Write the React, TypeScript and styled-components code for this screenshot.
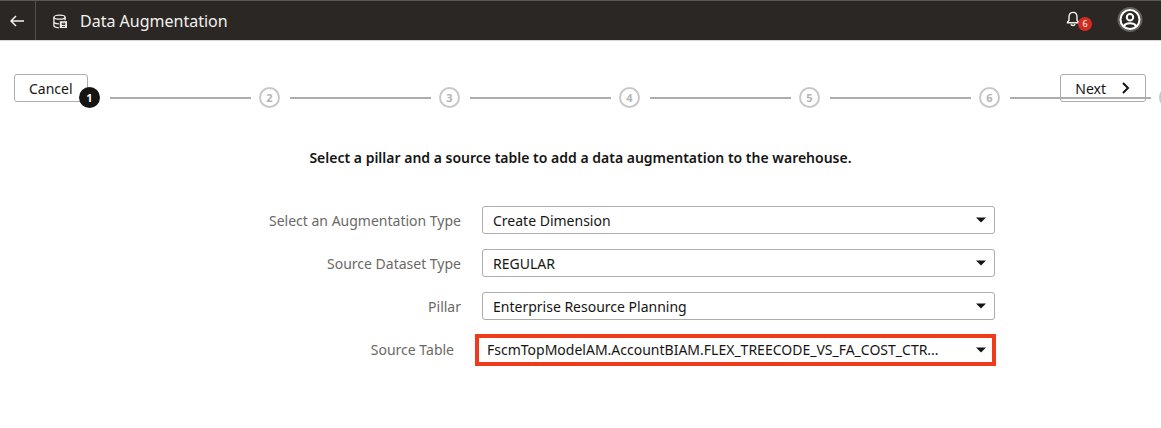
import React from "react";
import styled, { createGlobalStyle, css } from "styled-components";

const GlobalStyle = createGlobalStyle`
  *, *::before, *::after { box-sizing: border-box; }
  body {
    margin: 0;
    background: #fff;
    color: #161513;
    font: 14px/20px "Noto Sans", "Open Sans", sans-serif;
    overflow-x: hidden;
  }
  button, select { font: inherit; color: inherit; }
`;

const Header = styled.header`
  display: flex;
  align-items: stretch;
  height: 41px;
  border-top: 1px solid #5a5856;
  border-bottom: 1px solid #d9d7d5;
  background: #2b2724;
  color: #f3f1ee;
`;

const BackButton = styled.button`
  display: flex;
  align-items: center;
  justify-content: center;
  width: 36px;
  padding: 0 2px 0 0;
  border: 0;
  border-right: 1px solid #514e4b;
  background: none;
`;

const Brand = styled.div`
  display: flex;
  flex: 1;
  align-items: center;
  gap: 12px;
  padding-left: 17px;
`;

const Title = styled.h1`
  margin: 0;
  font-size: 16px;
  font-weight: 400;
  line-height: 20px;
`;

const HeaderActions = styled.div`
  display: flex;
  align-items: center;
  gap: 31px;
  padding-right: 18px;
`;

const IconButton = styled.button`
  position: relative;
  display: flex;
  padding: 0;
  border: 0;
  background: none;
`;

const Badge = styled.span`
  position: absolute;
  top: 6px;
  left: 12px;
  width: 14px;
  height: 14px;
  border-radius: 50%;
  background: #d42b1f;
  color: #fff;
  font-size: 9px;
  line-height: 14px;
  text-align: center;
`;

const Wizard = styled.section`
  display: grid;
  padding-top: 33px;
  overflow: hidden;
`;

const Toolbar = styled.div`
  grid-area: 1 / 1;
  display: flex;
  align-items: flex-start;
  justify-content: space-between;
  padding: 0 15px 0 14px;
`;

const Button = styled.button`
  display: flex;
  align-items: center;
  gap: 16px;
  height: 28px;
  padding: 2px 14px 0;
  border: 1px solid #aeacaa;
  border-radius: 3px;
  background: #fff;

  svg { margin-bottom: 2px; }
`;

const Steps = styled.ol`
  grid-area: 1 / 1;
  display: flex;
  min-width: 0;
  margin: 13px 0 0;
  padding: 0 0 0 79px;
  list-style: none;
  pointer-events: none;
`;

const Step = styled.li`
  display: flex;
  flex: 0 0 180px;
  align-items: center;
  gap: 10px;
  padding-right: 8px;

  &:not(:last-child)::after {
    content: "";
    flex: 1;
    height: 2px;
    background: #adadad;
  }
`;

const StepNumber = styled.span<{ $current: boolean }>`
  width: 21px;
  height: 21px;
  border: 2px solid ${(p) => (p.$current ? "#161513" : "#c8c8c8")};
  border-radius: 50%;
  background: ${(p) => (p.$current ? "#161513" : "#fff")};
  color: ${(p) => (p.$current ? "#fff" : "#b4b4b4")};
  font-size: 11px;
  font-weight: 700;
  line-height: 17px;
  text-align: center;
`;

const Intro = styled.h2`
  margin: 40px 16px 38px;
  font-size: 14px;
  font-weight: 600;
  line-height: 20px;
  text-align: center;
`;

const Form = styled.form`
  display: flex;
  flex-direction: column;
  gap: 15px;
  width: 100%;
  max-width: 829px;
  margin: 0 auto;
`;

const Row = styled.div<{ $highlighted: boolean }>`
  display: flex;
  align-items: center;
  gap: 21px;
  ${(p) => p.$highlighted && css`margin: -1px -1px 0 0;`}
`;

const Label = styled.label<{ $highlighted: boolean }>`
  flex: 1;
  padding-top: ${(p) => (p.$highlighted ? 0 : 2)}px;
  color: #6b6966;
  text-align: right;
`;

const Field = styled.div<{ $highlighted: boolean }>`
  display: grid;
  flex: 0 1 ${(p) => (p.$highlighted ? 521 : 513)}px;
  align-items: center;
`;

const Select = styled.select<{ $highlighted: boolean }>`
  grid-area: 1 / 1;
  width: 100%;
  min-width: 0;
  appearance: none;
  border: 1px solid #aeacaa;
  border-radius: 3px;
  height: 28px;
  padding: 2px 36px 0 10px;
  background: #fff;
  ${(p) =>
    p.$highlighted &&
    css`
      height: 32px;
      padding: 0 32px 0 8px;
      border: 4px solid #f03a1c;
      border-radius: 0;
    `}
`;

const Arrow = styled.svg<{ $highlighted: boolean }>`
  grid-area: 1 / 1;
  justify-self: end;
  margin-right: ${(p) => (p.$highlighted ? 10 : 9)}px;
  pointer-events: none;
`;

const FIELDS = [
  { id: "type", label: "Select an Augmentation Type", value: "Create Dimension" },
  { id: "dataset", label: "Source Dataset Type", value: "REGULAR" },
  { id: "pillar", label: "Pillar", value: "Enterprise Resource Planning" },
  {
    id: "table",
    label: "Source Table",
    value: "FscmTopModelAM.AccountBIAM.FLEX_TREECODE_VS_FA_COST_CTR...",
    highlighted: true,
  },
];

export default function App() {
  return (
    <>
      <GlobalStyle />
      <Header>
        <BackButton aria-label="Back">
          <svg width="14" height="12" viewBox="0 0 14 12" fill="none" stroke="currentColor" strokeWidth="1.5">
            <path d="M14 6H1.2M6 1L1 6l5 5" />
          </svg>
        </BackButton>
        <Brand>
          <svg width="15" height="17" viewBox="0 -2 15 17" fill="none" stroke="currentColor" strokeWidth="1.3">
            <ellipse cx="6.5" cy="3.2" rx="5.6" ry="2" />
            <path d="M.9 3.2v8.4c0 1.2 2 2.1 5 2.2M12.1 3.2v3M.9 7.8c0 1.2 2 2 5 2" />
            <path d="M6.800 7.200H14V14H6.800z" fill="currentColor" stroke="none" />
            <path d="M9 9.200h3v1.300H9zM9 12.500h3" stroke="#2b2724" strokeWidth="0.9" />
          </svg>
          <Title>Data Augmentation</Title>
        </Brand>
        <HeaderActions>
          <IconButton aria-label="Notifications, 6 unread">
            <svg width="20" height="19" viewBox="0 0 20 19" fill="none" stroke="currentColor" strokeWidth="1.4">
              <path d="M.8 11.8h12.4M1.3 11.5l1.7-2.300V6C3 3 4.600 1.400 7 1.400S11 3 11 6v3.200l1.700 2.300" />
              <path d="M4.800 13.300c.4.800 1.200 1.200 2.200 1.200s1.800-.4 2.200-1.200" />
            </svg>
            <Badge>6</Badge>
          </IconButton>
          <IconButton aria-label="Account">
            <svg width="26" height="28" viewBox="0 0 26 28" fill="none">
              <circle cx="13" cy="12.5" r="12.5" fill="#625f5c" />
              <circle cx="13" cy="12.5" r="9.5" fill="#2b2724" stroke="#fff" strokeWidth="2" />
              <circle cx="13" cy="10.300" r="3.200" stroke="#fff" strokeWidth="2" />
              <path d="M6.800 19c1.400-2 3.300-2.700 6.200-2.700s4.800.7 6.200 2.700" stroke="#fff" strokeWidth="2" />
            </svg>
          </IconButton>
        </HeaderActions>
      </Header>
      <main>
        <Wizard>
          <Toolbar>
            <Button type="button">Cancel</Button>
            <Button type="button">
              Next
              <svg width="9" height="12" viewBox="0 0 9 12" fill="none" stroke="currentColor" strokeWidth="2">
                <path d="M1 1l5 5-5 5" />
              </svg>
            </Button>
          </Toolbar>
          <Steps>
            {[1, 2, 3, 4, 5, 6, 7].map((n) => (
              <Step key={n}>
                <StepNumber $current={n === 1}>{n}</StepNumber>
              </Step>
            ))}
          </Steps>
        </Wizard>
        <Intro>Select a pillar and a source table to add a data augmentation to the warehouse.</Intro>
        <Form>
          {FIELDS.map(({ id, label, value, highlighted = false }) => (
            <Row key={id} $highlighted={highlighted}>
              <Label htmlFor={id} $highlighted={highlighted}>{label}</Label>
              <Field $highlighted={highlighted}>
                <Select id={id} $highlighted={highlighted}>
                  <option>{value}</option>
                </Select>
                <Arrow $highlighted={highlighted} width="10" height="6" viewBox="0 0 10 6">
                  <path d="M0 .5h10l-5 5z" fill="#161513" />
                </Arrow>
              </Field>
            </Row>
          ))}
        </Form>
      </main>
    </>
  );
}
